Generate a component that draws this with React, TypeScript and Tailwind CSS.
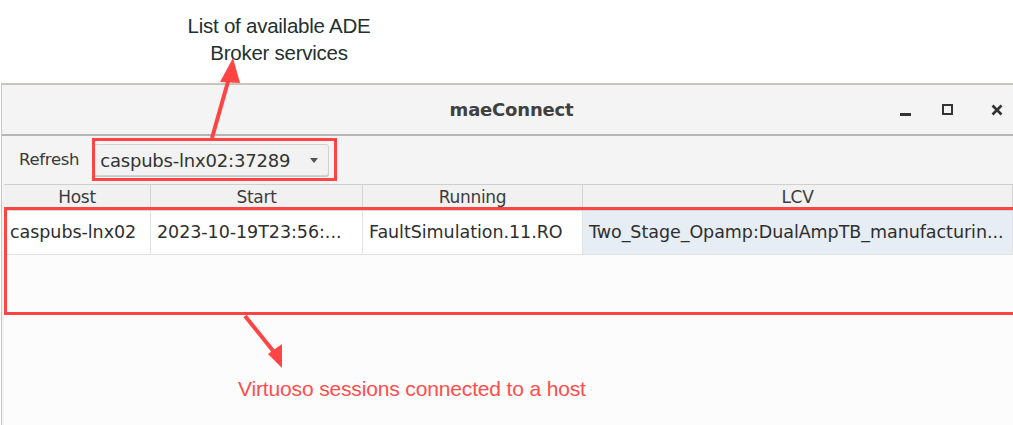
const COLS = [
  { label: 'Host', value: 'caspubs-lnx02', w: 'w-[147px]', sel: false },
  { label: 'Start', value: '2023-10-19T23:56:...', w: 'w-[212px]', sel: false },
  { label: 'Running', value: 'FaultSimulation.11.RO', w: 'w-[220px]', sel: false },
  { label: 'LCV', value: 'Two_Stage_Opamp:DualAmpTB_manufacturin...', w: 'flex-1', sel: true },
];

export default function App() {
  return (
    <div className="relative w-[1013px] h-[425px] overflow-hidden bg-white font-['DejaVu_Sans',sans-serif]">
      {/* annotation on top */}
      <div className="h-[83px] pt-[12px]">
        <div className="ml-[160px] w-[238px] text-center text-[20.5px] leading-[27px] text-[#233030] font-['Liberation_Sans',sans-serif] tracking-[-0.25px]">
          <p>List of available ADE</p>
          <p>Broker services</p>
        </div>
      </div>

      {/* window */}
      <div className="ml-[1px] border-t-2 border-l border-[#c9c6b8] bg-[#f4f4f4] h-[342px] flex flex-col">
        {/* title bar */}
        <div className="relative h-[49px] flex items-center justify-center">
          <span className="text-[18px] font-semibold text-[#404040] tracking-[-0.2px] pl-[8px]">maeConnect</span>
          <div className="absolute right-0 top-0 h-full flex items-center">
            <span className="w-[11px] h-[3px] bg-[#333] mt-[10px] mr-[31px]" />
            <span className="w-[11px] h-[11px] border-[2.5px] border-[#333] mr-[38px]" />
            <svg width="12" height="12" viewBox="0 0 12 12" className="mr-[10px]">
              <path d="M1.5 1.5 L10.5 10.5 M10.5 1.5 L1.5 10.5" stroke="#333" strokeWidth="2.6" />
            </svg>
          </div>
        </div>
        <div className="h-[2px] bg-[#b5b5b5]" />

        {/* toolbar */}
        <div className="h-[48px] flex items-center pl-[17px] gap-[14px]">
          <span className="text-[16.5px] text-[#3a3a3a] tracking-[-0.3px]">Refresh</span>
          <div className="w-[236px] h-[32px] flex items-center justify-between pl-[6px] pr-[10px] bg-[#f2f2f2] border border-[#d2d2d2] rounded-[3px] shadow-[0_1px_0_#c8c8c8]">
            <span className="text-[18px] text-[#333] tracking-[-0.2px]">caspubs-lnx02:37289</span>
            <span className="w-0 h-0 border-l-[4px] border-r-[4px] border-t-[5px] border-l-transparent border-r-transparent border-t-[#555]" />
          </div>
        </div>

        {/* table */}
        <div className="flex-1 ml-[2px] bg-[#fcfcfc] border-t border-[#cfcfcf] flex flex-col">
          <div className="flex h-[26px] bg-[#f1f1f1] border-b border-[#d4d4d4]">
            {COLS.map((c) => (
              <div key={c.label} className={`${c.w} border-r border-[#d4d4d4] flex items-center justify-center text-[17px] text-[#3c3c3c] tracking-[-0.3px]`}>
                {c.label}
              </div>
            ))}
          </div>
          <div className="flex h-[44px] border-b border-[#e2e2e2]">
            {COLS.map((c) => (
              <div
                key={c.label}
                className={`${c.w} border-r border-[#e2e2e2] flex items-center pl-[6px] text-[17.5px] text-[#2e2e2e] tracking-[-0.05px] whitespace-nowrap overflow-hidden ${c.sel ? 'bg-[#e6edf4]' : 'bg-white'}`}
              >
                {c.value}
              </div>
            ))}
          </div>
          <div className="pt-[118px] pl-[234px] text-[21px] text-[#ff4d4d] font-['Liberation_Sans',sans-serif] tracking-[-0.15px]">
            Virtuoso sessions connected to a host
          </div>
        </div>
      </div>

      {/* red highlight boxes and arrows */}
      <div className="absolute left-[92px] top-[138px] w-[245px] h-[43px] border-[3px] border-[#ff4444]" />
      <div className="absolute left-[4px] top-[207px] w-[1015px] h-[108px] border-[3px] border-[#ff4444]" />
      <svg className="absolute left-0 top-0" width="1013" height="425">
        <line x1="212" y1="138" x2="229" y2="78" stroke="#ff4444" strokeWidth="4" />
        <polygon points="233,58 220,82 240,83" fill="#ff4444" />
        <line x1="245" y1="316" x2="274" y2="352" stroke="#ff4444" strokeWidth="4" />
        <polygon points="282,368 268,354 282,344" fill="#ff4444" />
      </svg>
    </div>
  );
}
